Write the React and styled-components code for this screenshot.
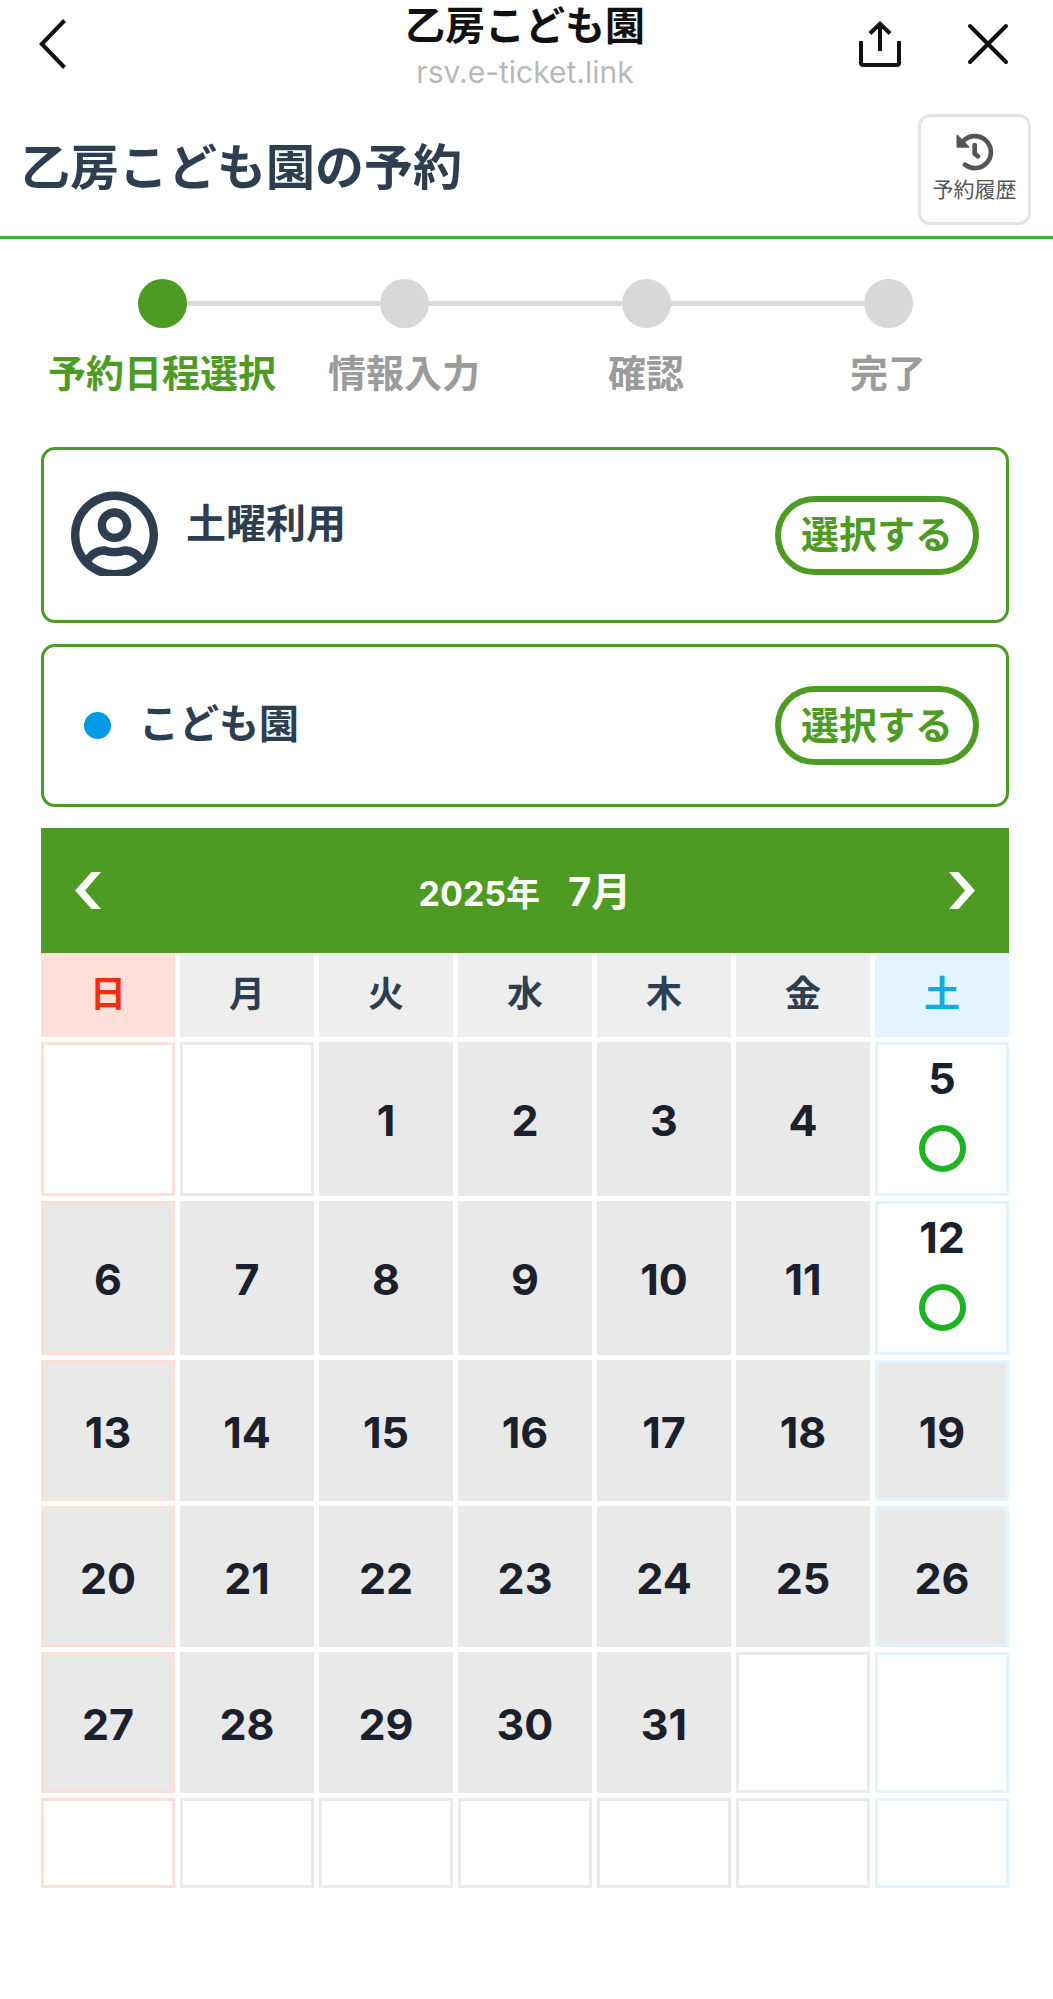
import React, {useState} from 'react';
import styled, {createGlobalStyle} from "styled-components";
import {FaRegUserCircle} from "react-icons/fa";

const weekdays = ["日", "月", "火", "水", "木", "金", "土"];
const steps = ["予約日程選択", "情報入力", "確認", "完了"];
const openDays = [5, 12];

// first day of July 2025 is a Tuesday
const weeks = Array.from({length: 6}, (_, week) =>
    weekdays.map((_, i) => {
        const day = week * 7 + i - 1;
        return day >= 1 && day <= 31 ? day : null;
    })
);

function dayType(index) {
    if (index === 0) return "sun";
    if (index === 6) return "sat";
    return "week";
}

const BackIcon = () => (
    <svg width="28" height="50" viewBox="0 0 28 50" fill="none" stroke="#111" strokeWidth="4" aria-hidden="true">
        <path d="M25.500 1.500L2.800 25L25.500 48.500"/>
    </svg>
);

const ShareIcon = () => (
    <svg width="42" height="46" viewBox="0 0 42 46" fill="none" stroke="#111" strokeWidth="4" aria-hidden="true">
        <path d="M2 20V41.500Q2 44 4.500 44H37.500Q40 44 40 41.500V20"/>
        <path d="M21 30V3M11 12.500L21 2.800L31 12.500"/>
    </svg>
);

const CloseIcon = () => (
    <svg width="44" height="42" viewBox="0 0 44 42" fill="none" stroke="#111" strokeWidth="4" strokeLinecap="round" aria-hidden="true">
        <path d="M3 3L39 39M39 3L3 39"/>
    </svg>
);

const HistoryIcon = () => (
    <svg width="38" height="38" viewBox="0 0 112 114" fill="none" stroke="#555" strokeWidth="14" strokeLinecap="round" strokeLinejoin="round" aria-hidden="true">
        <path d="M26 95A48 48 0 1 0 22 23"/>
        <path d="M55 36V62L65 70"/>
        <path d="M3 8L37 42H3Z" fill="#555" strokeWidth="5"/>
    </svg>
);

const PrevIcon = () => (
    <svg width="26" height="37" viewBox="0 0 26 37" fill="#fff" aria-hidden="true">
        <path d="M16.500 0H26L10 18.500L26 37H16.500L0 18.500Z"/>
    </svg>
);

const NextIcon = () => (
    <svg width="26" height="37" viewBox="0 0 26 37" fill="#fff" aria-hidden="true">
        <path d="M9.500 0H0L16 18.500L0 37H9.500L26 18.500Z"/>
    </svg>
);

function App() {
    const [selectedDay, setSelectedDay] = useState(null);

    return (
        <Page>
            <GlobalStyle/>
            <TopBar>
                <BarSide>
                    <IconButton type="button" aria-label="戻る"><BackIcon/></IconButton>
                </BarSide>
                <BarTitle>
                    <SiteName>乙房こども園</SiteName>
                    <SiteUrl>rsv.e-ticket.link</SiteUrl>
                </BarTitle>
                <BarSide $end>
                    <IconButton type="button" aria-label="共有"><ShareIcon/></IconButton>
                    <IconButton type="button" aria-label="閉じる"><CloseIcon/></IconButton>
                </BarSide>
            </TopBar>

            <Header>
                <Heading>乙房こども園の予約</Heading>
                <HistoryButton type="button">
                    <HistoryIcon/>
                    <span>予約履歴</span>
                </HistoryButton>
            </Header>

            <Main>
                <Steps>
                    {steps.map((step, i) => (
                        <Step key={step} $active={i === 0} aria-current={i === 0 ? "step" : undefined}>
                            <Track>
                                <Line $hidden={i === 0}/>
                                <StepDot $active={i === 0}/>
                                <Line $hidden={i === steps.length - 1}/>
                            </Track>
                            <StepLabel>{step}</StepLabel>
                        </Step>
                    ))}
                </Steps>

                <Cards>
                    <Card $height={176}>
                        <UserIcon aria-hidden="true"/>
                        <CardTitle $raised>土曜利用</CardTitle>
                        <SelectButton type="button">選択する</SelectButton>
                    </Card>
                    <Card $height={163}>
                        <BlueDot/>
                        <CardTitle>こども園</CardTitle>
                        <SelectButton type="button">選択する</SelectButton>
                    </Card>
                </Cards>

                <MonthBar>
                    <IconButton type="button" aria-label="前の月"><PrevIcon/></IconButton>
                    <MonthTitle><Year>2025年</Year>7月</MonthTitle>
                    <IconButton type="button" aria-label="次の月"><NextIcon/></IconButton>
                </MonthBar>
                <Calendar>
                    <thead>
                        <tr>
                            {weekdays.map((name, i) => (
                                <Weekday key={name} scope="col" $type={dayType(i)}>{name}</Weekday>
                            ))}
                        </tr>
                    </thead>
                    <tbody>
                        {weeks.map((days, week) => (
                            <tr key={week}>
                                {days.map((day, i) => {
                                    const open = openDays.includes(day);
                                    return <Day key={i} $type={dayType(i)} $filled={day && !open} $number={day}>
                                        {open
                                            ? <DayButton type="button" aria-pressed={selectedDay === day} onClick={() => setSelectedDay(day)}>
                                                {day}
                                                <Ring/>
                                            </DayButton>
                                            : day}
                                    </Day>
                                })}
                            </tr>
                        ))}
                    </tbody>
                </Calendar>
            </Main>
        </Page>
    );
}

const green = "#4d9b23";
const navy = "#2c3e50";

const cellBorders = {sun: "#ffe0d9", week: "#ebebeb", sat: "#e3f4ff"};
const weekdayColors = {sun: "#f22c0e", week: navy, sat: "#0cafdb"};
const weekdayBackgrounds = {sun: "#ffe0d9", week: "#eeeeee", sat: "#e3f4ff"};

const GlobalStyle = createGlobalStyle`
    * {
        box-sizing: border-box;
    }

    body {
        margin: 0;
        background: #fff;
        font-family: Inter, "Noto Sans CJK JP", sans-serif;
    }

    button {
        font-family: inherit;
        cursor: pointer;
    }
`

const Page = styled.div`
    min-height: 100vh;
    padding-bottom: 48px;
    color: ${navy};
`

const TopBar = styled.div`
    display: grid;
    grid-template-columns: 1fr auto 1fr;
    align-items: start;
    padding: 0 42px 0 39px;
`

const BarSide = styled.div`
    display: flex;
    align-items: center;
    justify-content: ${props => props.$end ? "flex-end" : "flex-start"};
    gap: 66px;
    height: 88px;
`

const IconButton = styled.button`
    display: flex;
    padding: 0;
    border: 0;
    background: none;
`

const BarTitle = styled.div`
    text-align: center;
`

const SiteName = styled.div`
    font-size: 40px;
    font-weight: 700;
    line-height: 52px;
    color: #111;
`

const SiteUrl = styled.div`
    font-size: 30px;
    line-height: 40px;
    color: #b9b9b9;
`

const Header = styled.header`
    display: flex;
    justify-content: space-between;
    align-items: flex-start;
    padding: 22px 22px 11px 21px;
    border-bottom: 3px solid #33b436;
`

const Heading = styled.h1`
    margin: 0;
    font-size: 49px;
    font-weight: 700;
    line-height: 108px;
`

const HistoryButton = styled.button`
    display: flex;
    flex-direction: column;
    align-items: center;
    gap: 7px;
    width: 113px;
    height: 111px;
    padding: 16px 0 0;
    border: 3px solid #e4e4e4;
    border-radius: 12px;
    background: #fff;
    color: #555;
    font-size: 21px;
    line-height: 24px;
`

const Main = styled.main`
    padding: 0 44px 0 41px;
`

const Steps = styled.ol`
    display: grid;
    grid-template-columns: repeat(4, 1fr);
    margin: 0;
    padding: 40px 0 50px;
    list-style: none;
`

const Step = styled.li`
    display: flex;
    flex-direction: column;
    gap: 21px;
    color: ${props => props.$active ? green : "#9b9b9b"};
`

const Track = styled.div`
    display: flex;
    align-items: center;
`

const Line = styled.span`
    flex: 1;
    height: 5px;
    background: ${props => props.$hidden ? "transparent" : "#d9d9db"};
`

const StepDot = styled.span`
    width: 49px;
    height: 49px;
    border-radius: 50%;
    background: ${props => props.$active ? green : "#d8d8da"};
`

const StepLabel = styled.span`
    font-size: 38px;
    font-weight: 700;
    line-height: 48px;
    text-align: center;
    white-space: nowrap;
`

const Cards = styled.div`
    display: grid;
    gap: 21px;
    margin-bottom: 21px;
`

const Card = styled.section`
    display: flex;
    align-items: center;
    gap: 28px;
    min-height: ${props => props.$height}px;
    padding: 0 27px;
    border: 3px solid ${green};
    border-radius: 14px;
`

const UserIcon = styled(FaRegUserCircle)`
    width: 87px;
    height: 90px;
    clip-path: inset(0 0 4px 0);
`

const BlueDot = styled.span`
    width: 27px;
    height: 27px;
    margin-left: 13px;
    border-radius: 50%;
    background: #039be5;
`

const CardTitle = styled.h2`
    flex: 1;
    margin: 0;
    padding-bottom: ${props => props.$raised ? 22 : 4}px;
    font-size: 40px;
    font-weight: 700;
    line-height: 50px;
`

const SelectButton = styled.button`
    width: 204px;
    height: 79px;
    padding: 0 0 2px;
    border: 6px solid ${green};
    border-radius: 40px;
    background: #fff;
    color: ${green};
    font-size: 38px;
    font-weight: 700;
    line-height: 50px;
`

const MonthBar = styled.div`
    display: flex;
    align-items: center;
    justify-content: space-between;
    height: 125px;
    padding: 0 34px;
    background: ${green};
`

const MonthTitle = styled.h2`
    margin: 0;
    padding-top: 4px;
    color: #fff;
    font-size: 40px;
    font-weight: 700;
    line-height: 50px;
`

const Year = styled.span`
    margin-right: 28px;
    font-size: 34px;
`

const Calendar = styled.table`
    display: grid;
    gap: 5px;

    thead, tbody {
        display: grid;
        gap: 5px;
    }

    tr {
        display: grid;
        grid-template-columns: repeat(7, 1fr);
        gap: 5px;
    }
`

const Weekday = styled.th`
    padding: 16px 0 18px;
    background: ${props => weekdayBackgrounds[props.$type]};
    color: ${props => weekdayColors[props.$type]};
    font-size: 36px;
    font-weight: 700;
    line-height: 50px;
`

const Day = styled.td`
    display: flex;
    align-items: center;
    justify-content: center;
    min-height: ${props => props.$number ? 141 : 90}px;
    padding: 2px 0 0;
    border: 3px solid ${props => props.$filled && props.$type === "week" ? "#e9e9e9" : cellBorders[props.$type]};
    background: ${props => props.$filled ? "#e9e9e9" : "#fff"};
    color: #1a202c;
    font-size: 43px;
    font-weight: 700;
    line-height: 42px;
`

const DayButton = styled.button`
    display: flex;
    flex-direction: column;
    align-items: center;
    gap: 26px;
    width: 100%;
    padding: 10px 0 21px;
    border: 0;
    background: none;
    color: inherit;
    font-size: inherit;
    font-weight: inherit;
    line-height: inherit;
`

const Ring = styled.span`
    width: 47px;
    height: 47px;
    border: 6px solid #1fb223;
    border-radius: 50%;
`

export default App;
